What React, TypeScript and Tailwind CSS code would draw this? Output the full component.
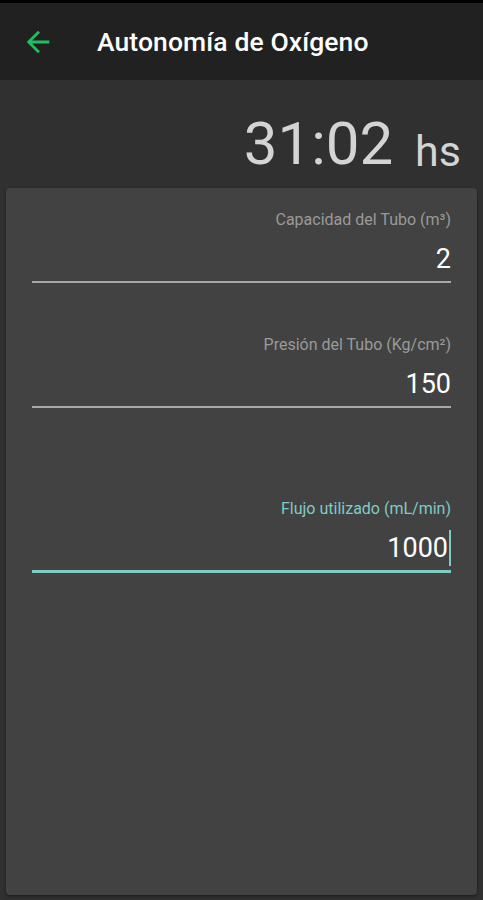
import React from 'react';

interface FieldProps {
  label: string;
  value: string;
  active?: boolean;
}

function Field({ label, value, active }: FieldProps) {
  return (
    <div className="flex flex-col items-end">
      <span className={`text-[16px] leading-[19px] ${active ? 'text-[#80cbc4]' : 'text-[#9a9a9a]'}`}>{label}</span>
      <div className="mt-[14px] flex items-center h-[32px]">
        <span className="text-[27px] leading-[32px] text-white">{value}</span>
        {active && <span className="ml-[1px] w-[2px] h-[36px] bg-[#80cbc4]" />}
      </div>
      <div className={`mt-[6px] w-full ${active ? 'h-[3px] bg-[#80cbc4]' : 'h-[2px] bg-[#a8a8a8]'}`} />
    </div>
  );
}

export default function App() {
  return (
    <div className="w-[483px] h-[900px] bg-[#303030] flex flex-col font-['Roboto',sans-serif] overflow-hidden">
      <div className="h-[3px] bg-black" />
      <header className="h-[77px] bg-[#212121] flex items-center">
        <svg width="34" height="34" viewBox="0 0 24 24" className="ml-[21px]">
          <path d="M20 11H7.83l5.59-5.59L12 4l-8 8 8 8 1.41-1.41L7.83 13H20v-2z" fill="#1fbf5f" />
        </svg>
        <h1 className="ml-[42px] text-[26.5px] font-medium text-white tracking-[0.1px]">Autonomía de Oxígeno</h1>
      </header>
      <div className="h-[108px] flex items-end justify-end pr-[22px] pb-[14px] text-[#d4d4d4]">
        <span className="text-[60px] leading-none">31:02</span>
        <span className="ml-[22px] text-[43px] leading-none mb-[1px]">hs</span>
      </div>
      <div className="flex-1 mx-[6px] mb-[5px] bg-[#424242] rounded-[4px] shadow-[0_1px_3px_rgba(0,0,0,0.5)] px-[26px] pt-[22px]">
        <Field label="Capacidad del Tubo (m³)" value="2" />
        <div className="h-[52px]" />
        <Field label="Presión del Tubo (Kg/cm²)" value="150" />
        <div className="h-[91px]" />
        <Field label="Flujo utilizado (mL/min)" value="1000" active />
      </div>
    </div>
  );
}
